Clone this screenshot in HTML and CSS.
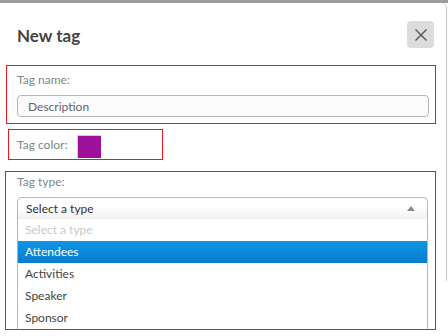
FILE: index.html
```html
<!DOCTYPE html>
<html lang="en">
<head>
  <meta charset="UTF-8">
  <title>New tag</title>
  <link rel="stylesheet" href="styles.css">
</head>
<body>

  <div class="modal">
    <div class="modal-head">
      <h3>New tag</h3>
      <button class="close-btn" type="button" aria-label="Close">
        <svg width="12" height="12" viewBox="0 0 12 12">
          <path d="M0.5 0.5 L11.5 11.5 M11.5 0.5 L0.5 11.5" stroke="#555" stroke-width="1.4" fill="none"/>
        </svg>
      </button>
    </div>

    <div class="group group-name">
      <label>Tag name:</label>
      <input type="text" value="Description">
    </div>

    <div class="group group-color">
      <label>Tag color:</label>
      <span class="swatch"></span>
    </div>

    <div class="group group-type">
      <label>Tag type:</label>
      <div class="chosen">
        <div class="chosen-single">
          <span>Select a type</span>
          <i class="arrow"></i>
        </div>
        <ul class="chosen-drop">
          <li class="disabled">Select a type</li>
          <li class="active">Attendees</li>
          <li>Activities</li>
          <li>Speaker</li>
          <li>Sponsor</li>
        </ul>
      </div>
    </div>
  </div>

</body>
</html>
```

FILE: styles.css
```css
* { box-sizing: border-box; }

body {
  margin: 0;
  padding-top: 3px;
  background: linear-gradient(#9d9d9d 0, #9d9d9d 3px, #fff 3px);
  font-family: 'Lato', 'Liberation Sans', sans-serif;
  font-size: 12px;
  color: #444;
  width: 448px;
  height: 336px;
  overflow: hidden;
}

.modal {
  width: 447px;
  height: 278px;
  background: white;
  border-right: 1px solid #c6c6c6;
  border-top-right-radius: 5px;
}

.modal-head {
  display: flex;
  align-items: center;
  justify-content: space-between;
  padding: 18px 12px 0 17px;
}
.modal-head h3 {
  margin: 0;
  font-size: 17px;
  font-weight: bold;
  color: #444;
  padding-top: 1px;
}
.close-btn {
  width: 27px;
  height: 27px;
  border: none;
  border-radius: 4px;
  background: #dcdcdc;
  padding: 0;
  display: flex;
  align-items: center;
  justify-content: center;
}

.group {
  border: 1px solid #f0141e;
}
.group label {
  display: block;
  color: #7b8789;
  line-height: 16px;
}

.group-name {
  margin: 17px 0 0 6px;
  width: 430px;
  padding: 6px 6px 6px 10px;
}
.group-name input {
  display: block;
  width: 100%;
  height: 22px;
  margin-top: 7px;
  border: 1px solid #adb8ba;
  border-radius: 4px;
  background: #fbfbfb;
  padding: 0 10px;
  font-family: inherit;
  font-size: 12px;
  color: #666;
  outline: none;
}

.group-color {
  margin: 5px 0 0 8px;
  width: 155px;
  height: 31px;
  padding: 0 8px;
  display: flex;
  align-items: center;
  gap: 10px;
}
.swatch {
  width: 24px;
  height: 23px;
  background: #9c109c;
  border-top: 1px solid #cfcfcf;
  border-left: 1px solid #cfcfcf;
  margin-top: 3px;
}

.group-type {
  margin: 11px 0 0 5px;
  width: 431px;
  padding: 2px 7px 0 11px;
}

.chosen {
  margin-top: 7px;
  position: relative;
}
.chosen-single {
  height: 22px;
  border: 1px solid #b0babd;
  border-bottom: none;
  border-radius: 5px 5px 0 0;
  background: linear-gradient(#fff 40%, #f1f1f1);
  padding: 0 8px;
  display: flex;
  align-items: center;
  justify-content: space-between;
  color: #333;
}
.arrow {
  width: 0;
  height: 0;
  border-left: 4px solid transparent;
  border-right: 4px solid transparent;
  border-bottom: 5px solid #8a8a8a;
  margin-right: 4px;
}
.chosen-drop {
  list-style: none;
  margin: 0;
  padding: 0;
  border-left: 1px solid #b0babd;
  border-right: 1px solid #b0babd;
}
.chosen-drop li {
  height: 22px;
  line-height: 22px;
  padding: 0 7px;
  color: #444;
}
.chosen-drop li.disabled {
  color: #c8c8c8;
}
.chosen-drop li.active {
  background: linear-gradient(#0f95e5, #087ccd);
  color: white;
}
```
